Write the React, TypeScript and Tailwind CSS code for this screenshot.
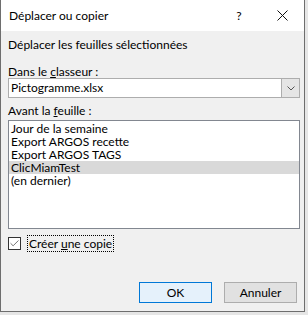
import { Check } from 'lucide-react'

export default function App() {
  const feuilles = [
    'Jour de la semaine',
    'Export ARGOS recette',
    'Export ARGOS TAGS',
    'ClicMiamTest',
    '(en dernier)',
  ]

  return (
    <div className="w-[308px] h-[315px] bg-[#e6e6e6] overflow-hidden" style={{ fontFamily: 'Lato, "Noto Sans", sans-serif' }}>
      <div className="w-[305px] h-[312px] flex flex-col border-l border-r border-b border-[#6e6e6e] bg-[#f0f0f0] text-[12px] text-black">
        {/* barre de titre */}
        <div className="h-[31px] bg-white flex items-center pl-[8px]">
          <span className="flex-1">Déplacer ou copier</span>
          <span className="w-[20px] text-center mr-[28px]">?</span>
          <svg width="11" height="11" viewBox="0 0 11 11" className="mr-[16px]">
            <path d="M0.5 0.5 L10.5 10.5 M10.5 0.5 L0.5 10.5" stroke="#111" strokeWidth="1" />
          </svg>
        </div>

        <div className="flex-1 flex flex-col px-[7px] leading-[16px]">
          <div className="mt-[6px]">Déplacer les feuilles sélectionnées</div>

          <div className="mt-[11px]">Dans le <u>c</u>lasseur :</div>
          <div className="mt-[-2px] h-[20px] flex border border-[#adadad] bg-white w-[292px]">
            <div className="flex-1 pl-[2px] leading-[18px]">Pictogramme.xlsx</div>
            <div className="w-[18px] bg-[#e5e5e5] border-l border-[#adadad] flex items-center justify-center">
              <svg width="8" height="5" viewBox="0 0 8 5">
                <path d="M0.5 0.5 L4 4 L7.5 0.5" stroke="#555" strokeWidth="1" fill="none" />
              </svg>
            </div>
          </div>

          <div className="mt-[5px]">Avant la <u>f</u>euille :</div>
          <div className="mt-[1px] h-[109px] w-[292px] border border-[#828790] bg-white py-[1px] leading-[13px]">
            {feuilles.map((f, i) => (
              <div key={i} className={`h-[13px] pl-[2px] ${f === 'ClicMiamTest' ? 'bg-[#d9d9d9]' : ''}`}>
                {f}
              </div>
            ))}
          </div>

          <div className="mt-[5px] flex items-center h-[18px]">
            <div className="w-[13px] h-[13px] border border-[#333] bg-white flex items-center justify-center">
              <Check size={11} strokeWidth={1.5} color="#333" />
            </div>
            <div className="ml-[6px] px-[1px] border border-dotted border-black leading-[15px]">
              Créer <u>u</u>ne copie
            </div>
          </div>

          <div className="mt-auto mb-[8px] flex justify-end gap-[12px]">
            <button className="w-[73px] h-[21px] border border-[#0078d7] bg-[#e5f1fb]">OK</button>
            <button className="w-[73px] h-[21px] border border-[#adadad] bg-[#e1e1e1]">Annuler</button>
          </div>
        </div>
      </div>
    </div>
  )
}
